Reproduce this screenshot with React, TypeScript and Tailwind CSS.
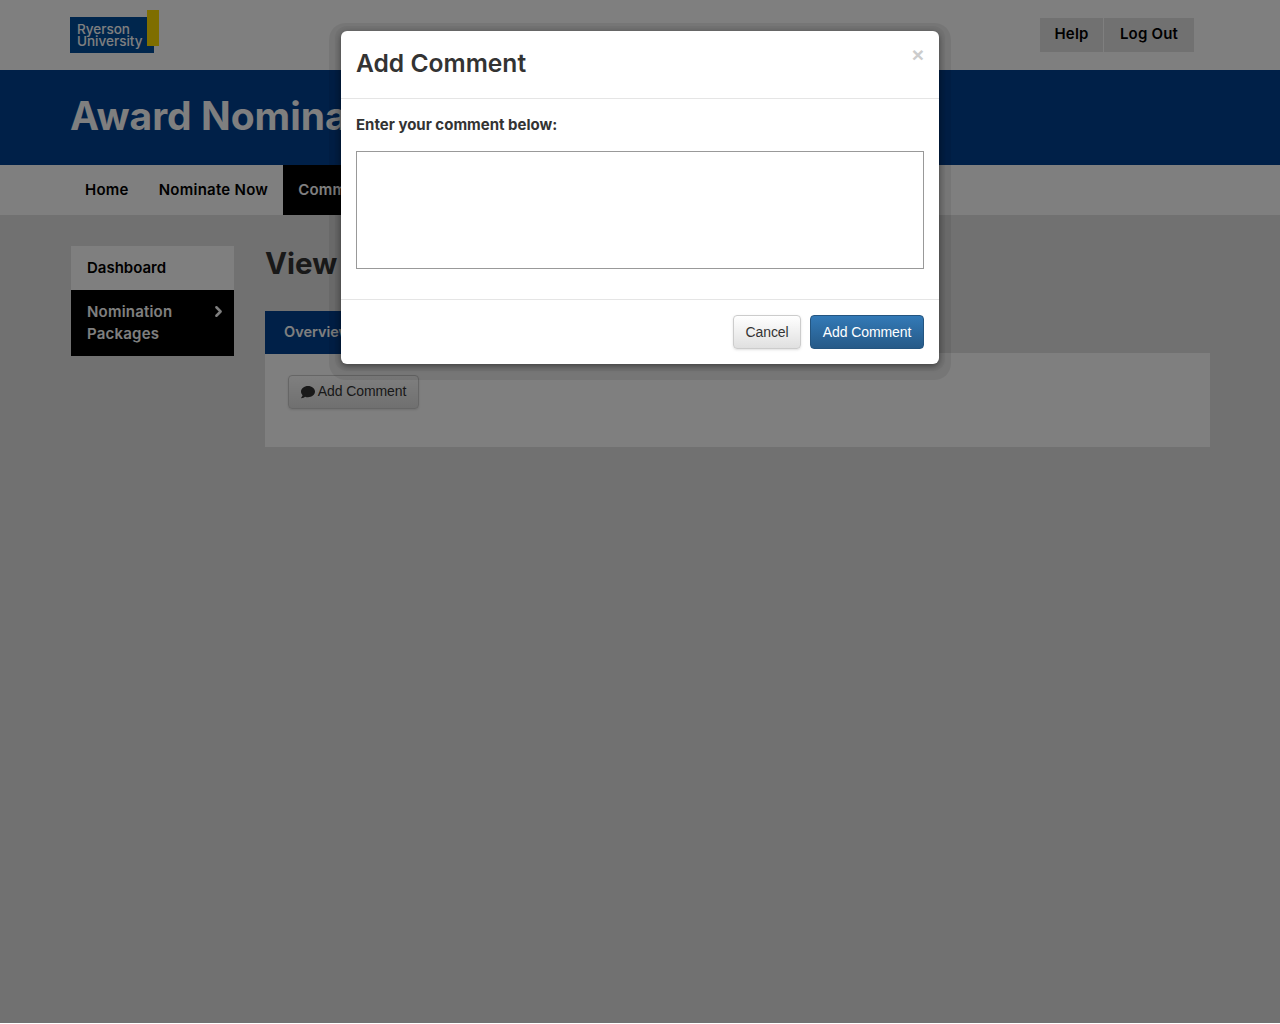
import { ChevronRight } from 'lucide-react';
import { FaComment } from 'react-icons/fa';

const headFont = "font-['Inter','Noto_Sans',sans-serif]";

function PageBehind() {
  return (
    <div className={`h-[1023px] bg-[#e2e2e2] ${headFont}`}>
      <header className="flex h-[70px] justify-between bg-white pl-[70px] pr-[86px]">
        <div className="relative mt-[17px] h-9 w-[84px] bg-[#004c9b] pl-[7px] pt-[6px] text-[13.5px] font-medium leading-[12px] text-white">
          <div>Ryerson</div>
          <div>University</div>
          <div className="absolute left-[77px] top-[-7px] h-9 w-3 bg-[#ffdc00]" />
        </div>
        <div className="mt-[18px] flex h-[34px] gap-px text-[15px] font-semibold leading-[31px] tracking-[0.2px] text-black">
          <div className="w-[63px] bg-[#e2e2e2] text-center">Help</div>
          <div className="w-[90px] bg-[#e2e2e2] text-center">Log Out</div>
        </div>
      </header>

      <div className="h-[95px] bg-[#004090] pl-[70px] pt-[22px] text-[39px] font-bold leading-[48px] text-white">
        Award Nominations
      </div>

      <nav className="flex h-[50px] bg-white pl-[70px] text-[15px] font-semibold leading-[50px] tracking-[0.25px] text-black">
        <div className="px-[15px]">Home</div>
        <div className="px-[15px]">Nominate Now</div>
        <div className="bg-black px-[15px] text-white">Committee</div>
      </nav>

      <div className="flex pl-[71px] pt-[31px]">
        <aside className="w-[163px] text-[15px] font-semibold">
          <div className="h-[44px] bg-white pl-4 pt-[10px] leading-[24px] text-black">Dashboard</div>
          <div className="relative h-[66px] bg-black pl-4 pr-12 pt-[11px] leading-[22px] tracking-[0.2px] text-white">
            Nomination Packages
            <ChevronRight className="absolute right-[7px] top-[13px] h-[17px] w-[17px]" strokeWidth={3.5} />
          </div>
        </aside>

        <main className="ml-[31px] w-[945px]">
          <h1 className="mt-[-3px] h-[68px] text-[29.5px] font-bold leading-[40px] text-[#333]">View Package</h1>
          <div className="relative h-[43px] w-[120px] bg-[#004090] pl-[19px] text-[14.5px] font-semibold leading-[42px] text-white">
            Overview
          </div>
          <div className="mt-[-1px] h-[94px] bg-white pl-[23px] pt-[22px]">
            <button className="flex h-[34px] w-[131px] items-center justify-center gap-[3px] rounded border border-[#ccc] bg-gradient-to-b from-white to-[#e0e0e0] pb-px font-['Liberation_Sans',sans-serif] text-[14px] tracking-[-0.1px] text-[#333] shadow-sm">
              <FaComment className="h-[14px] w-[14px]" />
              Add Comment
            </button>
          </div>
        </main>
      </div>
    </div>
  );
}

function CommentModal() {
  return (
    <div className="absolute left-[341px] top-[31px] w-[598px] rounded-md bg-white shadow-[0_2px_6px_rgba(0,0,0,0.45),0_1px_0_6px_rgba(0,0,0,0.03),0_4px_0_12px_rgba(0,0,0,0.065)]">
      <div className="relative h-[68px] border-b border-[#e5e5e5] pl-[15px] pt-[15px]">
        <h4 className={`text-[24.6px] font-semibold leading-[34px] text-[#333] ${headFont}`}>Add Comment</h4>
        <span className="absolute right-[15px] top-3 font-['Liberation_Sans',sans-serif] text-[21px] font-bold leading-[24px] text-[#ccc]">×</span>
      </div>
      <div className="h-[201px] border-b border-[#e5e5e5] px-[15px] pt-[15px]">
        <p className={`text-[15px] font-bold leading-[21px] text-[#333] ${headFont}`}>Enter your comment below:</p>
        <textarea className="mt-4 block h-[118px] w-[568px] resize-none border border-[#999] bg-white outline-none" />
      </div>
      <div className="flex h-[64px] justify-end gap-[9px] px-[15px] pt-[15px] font-['Liberation_Sans',sans-serif] text-[14px] tracking-[-0.1px]">
        <button className="h-[34px] w-[68px] rounded border border-[#ccc] bg-gradient-to-b from-white to-[#e0e0e0] text-[#333] shadow-sm">Cancel</button>
        <button className="h-[34px] w-[114px] rounded border border-[#245580] bg-gradient-to-b from-[#337ab7] to-[#265a88] text-white">Add Comment</button>
      </div>
    </div>
  );
}

export default function App() {
  return (
    <div className="relative h-[1024px] overflow-hidden bg-white">
      <PageBehind />
      <div className="absolute inset-x-0 top-0 h-[1023px] bg-black/50" />
      <CommentModal />
    </div>
  );
}
